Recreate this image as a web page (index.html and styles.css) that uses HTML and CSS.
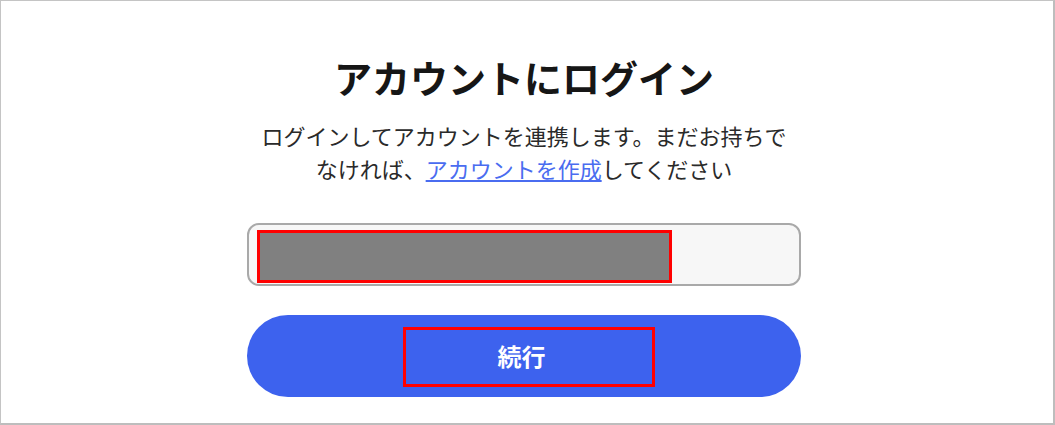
FILE: index.html
```html
<!DOCTYPE html>
<html>

<head>
    <meta charset="utf-8">
    <link rel="stylesheet" href="styles.css">

    <title>
        アカウントにログイン
    </title>
</head>

<body>

    <div class="frame">
        <h1 class="title">アカウントにログイン</h1>

        <p class="lead">
            ログインしてアカウントを連携します。まだお持ちで<br>なければ、<a href="#" class="link">アカウントを作成</a>してください
        </p>

        <div class="field">
            <div class="redacted"></div>
        </div>

        <button class="continue_button">
            <span class="marked">続行</span>
        </button>
    </div>

</body>

</html>
```

FILE: styles.css
```css
html,
body {
    margin: 0;
    padding: 0;
    background: #ffffff;
}

.frame {
    box-sizing: border-box;
    width: 1055px;
    height: 425px;
    display: flex;
    flex-direction: column;
    align-items: center;
    padding: 54px 6px 0 0;

    border-top: 1px solid #c4c4c4;
    border-left: 1px solid #c4c4c4;
    border-right: 2px solid #bdbdbd;
    border-bottom: 2px solid #bdbdbd;

    font-family: "Noto Sans CJK JP", "Noto Sans", sans-serif;
    color: #1a1a1a;
}

.title {
    margin: 0;
    font-size: 38px;
    line-height: 44px;
    font-weight: bold;
    color: #161616;
}

.lead {
    margin: 20px 0 0 0;
    width: 554px;
    text-align: center;
    font-size: 22px;
    line-height: 33px;
    color: #2a2a2a;
}

.link {
    color: #4a6cf0;
    text-decoration: underline;
}

.field {
    box-sizing: border-box;
    margin-top: 38px;
    width: 554px;
    height: 63px;
    padding: 5px 0 0 8px;

    border: 2px solid #a9a9a9;
    border-radius: 12px;
    background: #f7f7f7;
}

.redacted {
    box-sizing: border-box;
    width: 415px;
    height: 53px;
    border: 3px solid #ff0000;
    background: #808080;
}

.continue_button {
    margin-top: 29px;
    width: 554px;
    height: 82px;
    display: flex;
    align-items: center;
    justify-content: center;
    padding: 0 0 0 9px;

    border: none;
    border-radius: 41px;
    background: #3d62ee;
}

.marked {
    box-sizing: border-box;
    width: 252px;
    height: 60px;
    display: flex;
    align-items: center;
    justify-content: center;
    margin-top: 2px;
    padding: 0 14px 4px 0;

    border: 3px solid #ff0000;

    font-family: "Noto Sans CJK JP", "Noto Sans", sans-serif;
    font-size: 24px;
    font-weight: bold;
    color: #ffffff;
}
```
